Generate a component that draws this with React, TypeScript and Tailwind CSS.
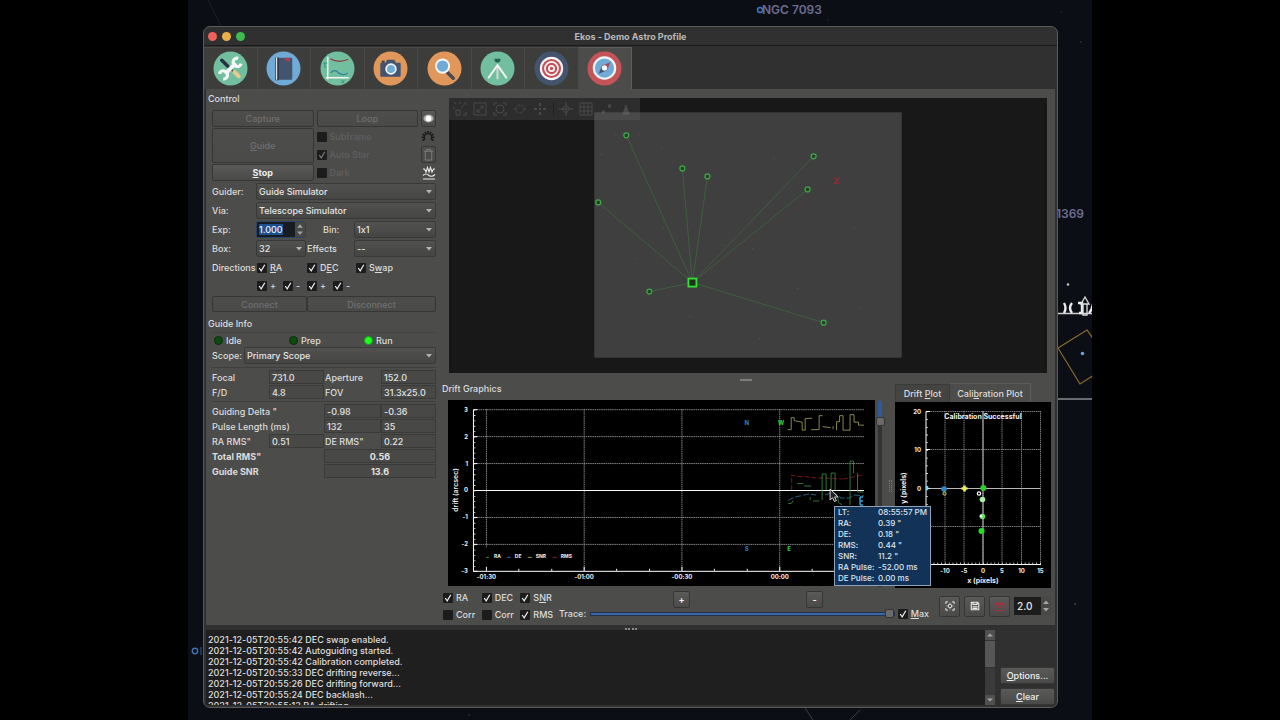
import type { ReactNode } from 'react';
import { useState } from 'react';
import clsx from 'clsx';

const LOG_LINES = [
  '2021-12-05T20:55:42 DEC swap enabled.',
  '2021-12-05T20:55:42 Autoguiding started.',
  '2021-12-05T20:55:42 Calibration completed.',
  '2021-12-05T20:55:33 DEC drifting reverse...',
  '2021-12-05T20:55:26 DEC drifting forward...',
  '2021-12-05T20:55:24 DEC backlash...',
  '2021-12-05T20:55:13 RA drifting...',
];

const TOOLTIP_ROWS = [
  ['LT:', '08:55:57 PM'],
  ['RA:', '0.39 "'],
  ['DE:', '0.18 "'],
  ['RMS:', '0.44 "'],
  ['SNR:', '11.2 "'],
  ['RA Pulse:', '-52.00 ms'],
  ['DE Pulse:', '0.00 ms'],
];

// Guide stars, relative to the viewer's top left corner.
const GUIDE_STARS = [
  [177, 37],
  [233, 70],
  [258, 78],
  [149, 104],
  [364, 58],
  [358, 91],
  [200, 193],
  [374, 224],
];

const FIELD_STARS = [
  [190, 36], [166, 36], [212, 50], [152, 56], [303, 150], [214, 130], [348, 190],
  [324, 60], [405, 130], [411, 210], [275, 147], [240, 218], [310, 240], [186, 160],
];

/* ---------- small controls ---------- */

type ButtonProps = { children: ReactNode; disabled?: boolean; className?: string; label?: string };

function PushButton({ children, disabled, className, label }: ButtonProps) {
  return (
    <button
      type="button"
      disabled={disabled}
      aria-label={label}
      className={clsx(
        'flex shrink-0 items-center justify-center rounded-[2px] border border-[#363635] bg-linear-to-b to-[#4a4a49]',
        disabled ? 'from-[#4d4d4c] text-[#70706f]' : 'from-[#5a5a59] text-[#eeeeee]',
        className,
      )}
    >
      {children}
    </button>
  );
}

type CheckProps = { children?: ReactNode; checked?: boolean; disabled?: boolean; label?: string };

function Check({ children, checked, disabled, label }: CheckProps) {
  return (
    <label className={clsx('flex items-center gap-[3px]', disabled && 'text-[#60605f]')}>
      <span className="grid size-[10px] shrink-0 place-items-center">
        <input
          type="checkbox"
          defaultChecked={checked}
          disabled={disabled}
          aria-label={label}
          className="peer col-start-1 row-start-1 size-[10px] appearance-none rounded-[1px] bg-[#1c1c1c]"
        />
        <svg
          viewBox="0 0 10 10"
          className={clsx(
            'pointer-events-none invisible col-start-1 row-start-1 size-[10px] fill-none peer-checked:visible',
            disabled ? 'stroke-[#777]' : 'stroke-[#f0f0f0]',
          )}
          strokeWidth="1.2"
        >
          <path d="M2.2 5 4.2 7.8 7.8 1.8" />
        </svg>
      </span>
      {children && <span>{children}</span>}
    </label>
  );
}

function Combo({ id, value, className }: { id: string; value: string; className?: string }) {
  return (
    <span className={clsx('grid h-[17px] items-center', className)}>
      <select
        id={id}
        defaultValue={value}
        className="col-start-1 row-start-1 h-full w-full appearance-none rounded-[2px] border border-[#393938] bg-linear-to-b from-[#515150] to-[#454544] px-[2px] text-[#e6e6e6]"
      >
        <option>{value}</option>
      </select>
      <svg viewBox="0 0 6 4" className="pointer-events-none col-start-1 row-start-1 mr-1 h-1 w-[6px] justify-self-end fill-[#b4b4b4]">
        <path d="M0 0h6L3 3.4z" />
      </svg>
    </span>
  );
}

function SpinArrows() {
  return (
    <svg viewBox="0 0 10 16" className="h-full w-[10px] shrink-0 bg-[#484847] fill-[#a5a5a5]">
      <path d="M2 6h6L5 2.5zM2 10h6L5 13.5z" />
    </svg>
  );
}

function Led({ on, children }: { on?: boolean; children: ReactNode }) {
  return (
    <span className="flex w-[75px] shrink-0 items-center gap-[3px]">
      <span className={clsx('size-[9px] rounded-full border', on ? 'border-[#14a014] bg-[#1eff1e]' : 'border-[#0a2c0a] bg-[#0d4a0d]')} />
      {children}
    </span>
  );
}

function Value({ value, label, className }: { value: string; label: string; className?: string }) {
  return (
    <input
      readOnly
      aria-label={label}
      defaultValue={value}
      className={clsx('h-[14px] w-full min-w-0 border border-[#3a3a39] bg-[#484847] px-[2px] text-[#e2e2e2]', className)}
    />
  );
}

/* ---------- module tab icons ---------- */

const MODULES: { name: string; color: string; art: ReactNode }[] = [
  {
    name: 'Setup',
    color: '#72bfa0',
    art: (
      <>
        <path d="M9 9.500 15 15.500" stroke="#273142" strokeWidth="3.600" strokeLinecap="round" />
        <path d="M15 15 21 21" stroke="#273142" strokeWidth="1.600" />
        <path d="m22 21.500 4.500 4.500" stroke="#e8c987" strokeWidth="4" strokeLinecap="round" />
        <path d="m12.500 23.500 11-11" stroke="#f6f6f6" strokeWidth="4" />
        <path d="M26 7.500a4.300 4.300 0 1 0 3 5.500M6.500 23.500a4.300 4.300 0 1 1 4 5.500" fill="none" stroke="#f6f6f6" strokeWidth="3.200" />
      </>
    ),
  },
  {
    name: 'Scheduler',
    color: '#6fabd6',
    art: (
      <>
        <path d="M9.500 7h4v23h-4z" fill="#3b4559" />
        <path d="M11 7v22.500" stroke="#f4f4f4" strokeWidth="1.200" />
        <path d="M12.500 7H26q1 0 1 1v20.500q0 1-1 1H12.500z" fill="#44546f" />
        <path d="M12.500 7v22.500" stroke="#1f2838" strokeWidth="1" />
        <path d="M20 7h4.500v4l-2.200-1.300L20 11z" fill="#b53b4d" />
      </>
    ),
  },
  {
    name: 'Analyze',
    color: '#72bfa0',
    art: (
      <g fill="none">
        <path d="M8 6v23M6 27.500h23.500" stroke="#f4f4f4" strokeWidth="1.500" />
        <path d="M10.500 8q9 5 18.500.500" stroke="#8c3b40" strokeWidth="1.300" />
        <path d="M11 22.500q4-4.500 8 0 5 3.500 9.500 0" stroke="#2f7f9f" strokeWidth="1.300" />
        <path d="M3.500 12.500h4M5 12.500v5M22 30l3 3M25 30l-3 3" stroke="#2f9079" strokeWidth="1" />
      </g>
    ),
  },
  {
    name: 'Capture',
    color: '#e2975a',
    art: (
      <>
        <path d="M8.500 12H13l1.500-3h7.500l1.500 3h4q1 0 1 1v12.500q0 1-1 1h-19q-1 0-1-1V13q0-1 1-1z" fill="#44546f" />
        <path d="M9 10h3v2H9z" fill="#2d384c" />
        <circle cx="18.500" cy="18.500" r="5" fill="#6fabd6" stroke="#f4f4f4" strokeWidth="1.800" />
      </>
    ),
  },
  {
    name: 'Focus',
    color: '#e2975a',
    art: (
      <>
        <path d="m21 22 6 6" stroke="#4b4a52" strokeWidth="3.600" strokeLinecap="round" />
        <circle cx="16" cy="15.500" r="6.800" fill="#6fabd6" stroke="#f6f6f6" strokeWidth="2" />
      </>
    ),
  },
  {
    name: 'Mount',
    color: '#72bfa0',
    art: (
      <>
        <path d="M15 8h6v1.500q-.500 2.500-3 2.500t-3-2.500z" fill="#22604f" />
        <path d="M18 16v13" stroke="#d5d9d2" strokeWidth="2.200" />
        <path d="m8.500 28 9.500-13.500L27.500 28" fill="none" stroke="#f6f6f6" strokeWidth="2" />
      </>
    ),
  },
  {
    name: 'Align',
    color: '#44546f',
    art: (
      <>
        <circle cx="18" cy="18" r="12" fill="#f6f6f6" />
        <circle cx="18" cy="18" r="8.700" fill="none" stroke="#c4505a" strokeWidth="2.200" />
        <circle cx="18" cy="18" r="4.700" fill="none" stroke="#c4505a" strokeWidth="2.200" />
        <circle cx="18" cy="18" r="1.700" fill="#c4505a" />
      </>
    ),
  },
  {
    name: 'Guide',
    color: '#c4545a',
    art: (
      <>
        <circle cx="18" cy="17.500" r="11" fill="#6fabd6" stroke="#f6f6f6" strokeWidth="2.200" />
        <path d="m24 11.500-3.500 8.500-5-5z" fill="#a8485a" />
        <path d="m12 23.500 3.500-8.500 5 5z" fill="#44546f" />
        <circle cx="18" cy="17.500" r="2.800" fill="#f6f6f6" />
      </>
    ),
  },
];

function ModuleTabs() {
  const [active, setActive] = useState('Guide');
  return (
    <nav className="h-[43px] bg-[#303030] pt-px">
      <div role="tablist" className="grid h-[42px] w-[428px] grid-cols-8">
        {MODULES.map((m) => (
          <button
            key={m.name}
            type="button"
            role="tab"
            aria-label={m.name}
            aria-selected={m.name === active}
            onClick={() => setActive(m.name)}
            className={clsx(
              'grid place-items-center border-t border-r',
              m.name === active ? 'border-[#5e5e5d] bg-[#4c4c4a]' : 'border-[#4a4a49] bg-[#3d3d3b]',
            )}
          >
            <svg viewBox="0 0 36 36" className="size-[35px]">
              <circle cx="18" cy="18" r="17.500" fill={m.color} />
              {m.art}
            </svg>
          </button>
        ))}
      </div>
    </nav>
  );
}

/* ---------- left column ---------- */

function ControlPanel() {
  return (
    <section>
      <h2 className="mt-1">Control</h2>
      <div className="mt-[6px] ml-1 flex flex-col gap-[2px]">
        <div className="grid auto-rows-[17px] grid-cols-[1fr_1fr_15px] gap-x-[3px] gap-y-px">
          <PushButton disabled>Capture</PushButton>
          <PushButton disabled>Loop</PushButton>
          <PushButton label="Toggle preview">
            <svg viewBox="0 0 14 14" className="size-[13px]">
              <ellipse cx="7" cy="7" rx="5.500" ry="4.200" fill="#a8a8a8" />
              <circle cx="7" cy="7" r="3.200" fill="#fff" />
            </svg>
          </PushButton>
          <PushButton disabled className="row-span-2"><span><u>G</u>uide</span></PushButton>
          <Check disabled>Subframe</Check>
          <svg viewBox="0 0 14 14" className="size-[14px] self-center fill-none stroke-[#191919]" strokeWidth="1.600">
            <path d="M7 1v3.500M10 1.800 8.600 4.800M12.500 4.200 9.700 6M13.300 7.200h-3.400M4 1.800l1.400 3M1.500 4.200 4.300 6M.700 7.200h3.400M1.500 10.500l2.800-1.800M12.500 10.500 9.700 8.700" />
          </svg>
          <Check disabled checked>Auto Star</Check>
          <PushButton disabled label="Clear calibration">
            <svg viewBox="0 0 14 14" className="size-[13px] fill-none stroke-[#80807f]" strokeWidth="1">
              <path d="M2 3.500h10M5 3.500V1.500h4v2M3.500 3.500v9.500h7V3.500" />
            </svg>
          </PushButton>
          <PushButton className="font-bold"><span><u>S</u>top</span></PushButton>
          <Check disabled>Dark</Check>
          <button type="button" aria-label="Guide assistant" className="grid place-items-center">
            <svg viewBox="0 0 14 14" className="size-[14px] fill-none stroke-[#ececec]" strokeWidth="1.100">
              <path d="M1 3h1.500L4 6l1.500-4.500L7 6l1.500-4.500L10 6l1.500-3H13M1 9.500q3-3 6 0 3 2 6-1M1 13h12" />
            </svg>
          </button>
        </div>
        <div className="flex items-center">
          <label htmlFor="guider" className="w-[44px]">Guider:</label>
          <Combo id="guider" value="Guide Simulator" className="flex-1" />
        </div>
        <div className="flex items-center">
          <label htmlFor="via" className="w-[44px]">Via:</label>
          <Combo id="via" value="Telescope Simulator" className="flex-1" />
        </div>
        <div className="flex items-center">
          <label htmlFor="exp" className="w-[44px]">Exp:</label>
          <span className="flex h-[17px] w-[50px] rounded-[2px] border border-[#2c4468]">
            <input
              id="exp"
              defaultValue="1.000"
              className="w-[38px] min-w-0 border-y-2 border-r-[12px] border-l-2 border-[#171b22] bg-[#1d4f92] text-[#f2f2f2]"
            />
            <SpinArrows />
          </span>
          <label htmlFor="bin" className="w-[48px] pl-[17px]">Bin:</label>
          <Combo id="bin" value="1x1" className="flex-1" />
        </div>
        <div className="flex items-center">
          <label htmlFor="box" className="w-[44px]">Box:</label>
          <Combo id="box" value="32" className="w-[50px]" />
          <label htmlFor="effects" className="w-[48px] pl-px">Effects</label>
          <Combo id="effects" value="--" className="flex-1" />
        </div>
        <fieldset className="flex flex-col gap-px">
          <div className="flex h-[17px] items-center">
            <span className="w-[45px]">Directions</span>
            <div className="grid grid-cols-[50px_49px_50px]">
              <Check checked><u>R</u>A</Check>
              <Check checked>D<u>E</u>C</Check>
              <Check checked>S<u>w</u>ap</Check>
            </div>
          </div>
          <div className="ml-[45px] grid h-[17px] grid-cols-[26px_24px_26px_24px] items-center">
            <Check checked>+</Check>
            <Check checked>-</Check>
            <Check checked>+</Check>
            <Check checked>-</Check>
          </div>
        </fieldset>
        <div className="grid h-4 grid-cols-[95px_1fr]">
          <PushButton disabled>Connect</PushButton>
          <PushButton disabled>Disconnect</PushButton>
        </div>
      </div>
    </section>
  );
}

function GuideInfo() {
  return (
    <section>
      <h2 className="mt-[6px]">Guide Info</h2>
      <div className="mt-[3px] ml-1">
        <div className="flex h-[15px] items-center border-t border-[#444443] pl-[2px]">
          <Led>Idle</Led>
          <Led>Prep</Led>
          <Led on>Run</Led>
        </div>
        <div className="flex items-center border-b border-[#3e3e3d] pb-[3px]">
          <label htmlFor="scope" className="w-[32px]">Scope:</label>
          <Combo id="scope" value="Primary Scope" className="flex-1" />
        </div>
        <div className="mt-[2px] grid grid-cols-[57px_1fr_57px_1fr] items-center gap-y-px">
          <span>Focal</span>
          <Value label="Focal" value="731.0" />
          <span className="pl-px">Aperture</span>
          <Value label="Aperture" value="152.0" />
          <span>F/D</span>
          <Value label="F/D" value="4.8" />
          <span className="pl-px">FOV</span>
          <Value label="FOV" value="31.3x25.0" />
          <hr className="col-span-4 my-px border-[#3e3e3d]" />
          <span className="col-span-2">Guiding Delta "</span>
          <Value label="RA guiding delta" value="-0.98" />
          <Value label="DEC guiding delta" value="-0.36" />
          <span className="col-span-2">Pulse Length (ms)</span>
          <Value label="RA pulse length" value="132" />
          <Value label="DEC pulse length" value="35" />
          <span>RA RMS"</span>
          <Value label="RA RMS" value="0.51" />
          <span className="pl-px">DE RMS"</span>
          <Value label="DE RMS" value="0.22" />
          <span className="col-span-2 font-bold">Total RMS"</span>
          <Value label="Total RMS" value="0.56" className="col-span-2 text-center font-bold" />
          <span className="col-span-2 font-bold">Guide SNR</span>
          <Value label="Guide SNR" value="13.6" className="col-span-2 text-center font-bold" />
        </div>
      </div>
    </section>
  );
}

/* ---------- camera view ---------- */

const VIEW_TOOLS: { name: string; art: ReactNode }[] = [
  { name: 'Zoom fit', art: <path d="M1 1h2M6 1h2M11 1h2v2M1 5v2M8 6l3-3M3 8h4v5H3zM13 10v3h-3" /> },
  { name: 'Zoom default', art: <path d="M1 1h12v12H1zM4 10l6-6M7 4h3v3M4 7v3h3" /> },
  { name: 'Zoom in', art: <path d="M1 4V1h3M10 1h3v3M13 10v3h-3M4 13H1v-3M7 3a4 4 0 1 0 0 8 4 4 0 0 0 0-8z" /> },
  { name: 'Zoom out', art: <path d="M7 3a4 4 0 1 0 0 8 4 4 0 0 0 0-8zM1 7h2M11 7h2" strokeDasharray="3 1" /> },
  { name: 'Center', art: <path d="M7 1v3M7 10v3M1 7h3M10 7h3M6 7h2" strokeWidth="2" /> },
  { name: 'Crosshair', art: <path d="M7 0v14M0 7h14M7 3 3 7l4 4 4-4z" /> },
  { name: 'Grid', art: <path d="M1 1h12v12H1zM5 1v12M9 1v12M1 5h12M1 9h12" /> },
  { name: 'Mark stars', art: <path d="M3 10h3M9 4h3" strokeWidth="3" /> },
  { name: 'Histogram', art: <path d="m7 3 3 9H4z" fill="#8a8a8a" /> },
];

function GuideView() {
  return (
    <div className="relative mr-2 ml-[13px] flex min-h-[200px] flex-1 basis-0 bg-[#181818]">
      <svg viewBox="0 0 597 274" className="h-full min-h-0 w-full flex-1">
        <rect x="145" y="14" width="307" height="245" fill="#3f3f3f" />
        {FIELD_STARS.map(([x, y]) => (
          <circle key={`${x}-${y}`} cx={x} cy={y} r=".8" fill="#505050" />
        ))}
        {GUIDE_STARS.map(([x, y]) => (
          <line key={`${x}-${y}`} x1="243" y1="184" x2={x} y2={y} stroke="#3f663f" strokeWidth=".8" />
        ))}
        <path d="M243 184 384 83" stroke="#7a2a2a" strokeWidth=".6" strokeDasharray="2 4" />
        <path d="m384 86 6-7M384 79l4 3M386 85l5-1" stroke="#a32a34" strokeWidth="1" />
        {GUIDE_STARS.map(([x, y]) => (
          <circle key={`${x}-${y}`} cx={x} cy={y} r="2.500" fill="#234523" stroke="#3fa84a" strokeWidth="1.200" />
        ))}
        <rect x="239" y="180" width="8" height="8" fill="#1d331d" stroke="#35e035" strokeWidth="1.800" />
      </svg>
      <div className="absolute top-0 left-0 flex h-[22px] w-[191px] items-center gap-[6px] bg-[#6a6a6a]/25 pl-1">
        {VIEW_TOOLS.map((t) => (
          <button
            key={t.name}
            type="button"
            aria-label={t.name}
            className={clsx(t.name === 'Crosshair' && 'border-l border-[#222] pl-[5px]')}
          >
            <svg viewBox="0 0 14 14" className="size-[14px] fill-none stroke-[#8a8a8a] opacity-30" strokeWidth="1">
              {t.art}
            </svg>
          </button>
        ))}
      </div>
    </div>
  );
}

/* ---------- plots ---------- */

const driftY = (v: number) => 90.5 - v * 27;

function DriftChart() {
  return (
    <svg viewBox="0 0 428 186" className="h-[186px] w-full bg-black text-[6px] font-bold" fill="#f0f0f0">
      <g stroke="#969696" strokeWidth=".9" strokeDasharray="1.500 .7">
        {[3, 2, 1, -1, -2].map((v) => (
          <line key={v} x1="26" x2="417" y1={driftY(v)} y2={driftY(v)} />
        ))}
        {[38.5, 136.5, 234.5, 332.5].map((x) => (
          <line key={x} x1={x} x2={x} y1="9" y2={x < 100 ? 148 : 171} />
        ))}
      </g>
      <path d="M25.500 9.500v162H417M25.500 90.500H417" stroke="#fff" strokeWidth="1" fill="none" />
      {[3, 2, 1, 0, -1, -2, -3].map((v) => (
        <g key={v}>
          <path d={`M25.500 ${driftY(v)}h4`} stroke="#fff" />
          <text x="20" y={driftY(v) + 2} textAnchor="end">{v}</text>
        </g>
      ))}
      <path d="M26.500 9.500v162" stroke="#ddd" strokeWidth="2" strokeDasharray=".8 4.600" />
      <path d="M38.500 171v-4M71 171v-2M104 171v-2M136.500 171v-4M169 171v-2M202 171v-2M234.500 171v-4M267 171v-2M300 171v-2M332.500 171v-4M365 171v-2" stroke="#fff" />
      {['-01:30', '-01:00', '-00:30', '00:00'].map((t, i) => (
        <text key={t} x={38.5 + i * 98} y="179" textAnchor="middle">{t}</text>
      ))}
      <text x="10" y="90" textAnchor="middle" className="text-[7px] font-semibold" transform="rotate(-90 10 90)">drift (arcsec)</text>
      <g className="text-[5px]">
        <path d="M38 157.500h3" stroke="#4a8a4a" />
        <text x="46" y="158">RA</text>
        <path d="M59 157.500h4" stroke="#3c64a8" />
        <text x="67" y="158">DE</text>
        <path d="M80 157.500h4" stroke="#a0a070" />
        <text x="88" y="158">SNR</text>
        <path d="M105 157.500h4" stroke="#902030" />
        <text x="113" y="158">RMS</text>
      </g>
      <g textAnchor="middle">
        <text x="299.500" y="25" fill="#2f86c9">N</text>
        <text x="334" y="25" fill="#3ddc3d">W</text>
        <text x="299.500" y="151" fill="#2f86c9">S</text>
        <text x="342" y="151" fill="#3ddc3d">E</text>
      </g>
      <g fill="none" strokeWidth=".9" opacity=".85">
        <path
          d="M340.500 29.500h3.500V17.500h3v3l8 1.500v8h3V18.500l7-.500M364 29.500h8V15.500h3.500M375.500 26.500l8 1M386 26v3M389.500 30V21.500h3V15.500h3.500V30h7V14.500h4v7.500h4.500v3h5.500"
          stroke="#b3b061"
        />
        <path d="M344.500 90V75l6 1.500h7l12 1.500h8l18 1M396 79l10-2 9-2" stroke="#a01c22" strokeDasharray="5 2" />
        <path d="M341 103.500h3l2-3M350 83.500h6M357 86h7M363 97v3M366 101h6M375 100V74h4v16M384 90V73h4v17M391 97v5l4 3M403 105V61h3.500v12M410.500 73v19h6" stroke="#3f9c46" />
        <path d="M341 100.500q6-4 12-4.500l8-2 8 1M378 95l8-3 8 6h8l6-3 9 1" stroke="#2f86a9" strokeDasharray="6 2" />
      </g>
      <path d="M413 97v8M413 97h3M413 101h3M413 105h3" stroke="#2f9fe0" fill="none" strokeWidth="1.500" />
      <path d="M383 89v11l2.500-2.200 1.800 3.800 2-1-1.800-3.600h3.500z" fill="#222" stroke="#eee" strokeWidth=".9" />
    </svg>
  );
}

function CalibrationChart() {
  const xs = [50, 69, 88, 107, 126.5, 145.5];
  return (
    <svg viewBox="0 0 156 186" className="h-[186px] w-full bg-black text-[6px] font-bold" fill="#f0f0f0">
      <g stroke="#8a8a8a" strokeWidth=".9" strokeDasharray="1.500 .7">
        {[9.5, 47.5, 124.5].map((y) => (
          <line key={y} x1="31" x2="145" y1={y} y2={y} />
        ))}
        {xs.map((x) => (
          <line key={x} x1={x} x2={x} y1="9" y2="162" />
        ))}
      </g>
      <path d="M31 86.500h114.500M88 9v153" stroke="#b8b8b8" />
      <path d="M31 9.500v153h115" stroke="#fff" fill="none" />
      <path d="M32 9.500v153" stroke="#ddd" strokeWidth="2" strokeDasharray=".8 6.900" />
      <path d="M31 161.500h115" stroke="#ddd" strokeWidth="2" strokeDasharray=".8 3" />
      <path d="M31 9.500h4M31 47.500h4M31 86.500h4M31 124.500h4" stroke="#fff" />
      <g textAnchor="end">
        <text x="26" y="11.500">20</text>
        <text x="26" y="50">10</text>
        <text x="26" y="88.500">0</text>
      </g>
      <g textAnchor="middle">
        {['-10', '-5', '0', '5', '10', '15'].map((t, i) => (
          <text key={t} x={xs[i]} y="170.500">{t}</text>
        ))}
        <text x="88" y="180.500" className="text-[7px]">x (pixels)</text>
        <text x="11" y="86" className="text-[7px]" transform="rotate(-90 11 86)">y (pixels)</text>
        <text x="88" y="17" className="text-[7px]">Calibration Successful</text>
      </g>
      <path d="M31 83.500a2.500 2.500 0 0 1 0 5z" fill="#7fd6e8" />
      <circle cx="49" cy="87" r="2.800" fill="#2f86c9" />
      <circle cx="49.500" cy="91.500" r="1.600" fill="#333" stroke="#cdd86a" />
      <path d="M66.500 86.500h6M69.500 83.500v6" stroke="#f0f060" strokeWidth="2.600" />
      <circle cx="84" cy="91.500" r="1.700" fill="#000" stroke="#fff" strokeWidth="1.200" />
      <circle cx="88.300" cy="86" r="3" fill="#22d522" />
      <circle cx="87.500" cy="97.500" r="2.800" fill="#a6f3a6" />
      <circle cx="87.500" cy="114.500" r="2.800" fill="#5fe45f" />
      <circle cx="86" cy="114" r="1.500" fill="#eaffea" />
      <circle cx="86.500" cy="129" r="3" fill="#22e022" />
    </svg>
  );
}

function DriftTooltip() {
  return (
    <dl className="absolute top-[106px] left-[386px] z-10 grid w-[97px] grid-cols-[40px_1fr] border border-[#8ea3b8] bg-[#123258] px-[3px] pb-px text-[8px] leading-[11px] text-[#dde5ee] whitespace-nowrap">
      {TOOLTIP_ROWS.map(([k, v]) => (
        <div key={k} className="contents">
          <dt>{k}</dt>
          <dd>{v}</dd>
        </div>
      ))}
    </dl>
  );
}

function PlotControls() {
  return (
    <div className="mt-[3px] flex h-[30px] pl-[1px]">
      <div className="grid w-[116px] grid-cols-3 gap-y-1">
        <Check checked>RA</Check>
        <Check checked>DEC</Check>
        <Check checked>S<u>N</u>R</Check>
        <Check>Corr</Check>
        <Check>Corr</Check>
        <Check checked>RMS</Check>
      </div>
      <div className="flex flex-1 flex-col">
        <div className="flex gap-[116px] pl-[114px]">
          <PushButton className="size-[17px] font-bold">+</PushButton>
          <PushButton className="size-[17px] font-bold">-</PushButton>
        </div>
        <div className="flex items-center">
          <label htmlFor="trace" className="w-[31px]">Trace:</label>
          <input
            id="trace"
            type="range"
            defaultValue={100}
            className="mr-[3px] h-[10px] flex-1 appearance-none bg-transparent [&::-webkit-slider-runnable-track]:h-1 [&::-webkit-slider-runnable-track]:border [&::-webkit-slider-runnable-track]:border-[#22324d] [&::-webkit-slider-runnable-track]:bg-[#3b66a6] [&::-webkit-slider-thumb]:mt-[-4px] [&::-webkit-slider-thumb]:size-[9px] [&::-webkit-slider-thumb]:appearance-none [&::-webkit-slider-thumb]:rounded-[2px] [&::-webkit-slider-thumb]:border [&::-webkit-slider-thumb]:border-[#333] [&::-webkit-slider-thumb]:bg-[#6a6a69]"
          />
          <Check checked><u>M</u>ax</Check>
        </div>
      </div>
      <div className="ml-[10px] flex items-center gap-1">
        <PushButton label="Autoscale" className="size-[21px]">
          <svg viewBox="0 0 12 12" className="size-[10px] fill-none stroke-[#e6e6e6]" strokeWidth="1.200">
            <path d="M1 3.500V1h2.500M8.500 1H11v2.500M11 8.500V11H8.500M3.500 11H1V8.500" />
            <circle cx="6" cy="6" r="2.200" />
            <path d="M6 2v1M6 9v1M2 6h1M9 6h1" />
          </svg>
        </PushButton>
        <PushButton label="Export" className="size-[21px]">
          <svg viewBox="0 0 12 12" className="size-[10px] fill-none stroke-[#ececec]" strokeWidth="1.300">
            <path d="M1.500 1.500h7.500l1.500 1.500v7.500h-9zM3.500 1.500v2.500h5V1.500M3 7h6M3 9h6" />
          </svg>
        </PushButton>
        <PushButton label="Clear graphs" className="size-[21px]">
          <svg viewBox="0 0 12 12" className="size-[11px] fill-none stroke-[#a5303f]" strokeWidth="1.300">
            <path d="M1.500 2.500h9v8h-9zM1.500 4h9M3.500 1v2M8.500 1v2M4 7h4" />
          </svg>
        </PushButton>
        <span className="flex h-[18px] w-[37px]">
          <input aria-label="Accuracy radius" defaultValue="2.0" className="w-[27px] min-w-0 bg-[#1c1c1c] px-[3px] text-[10px] text-[#e8e8e8]" />
          <SpinArrows />
        </span>
      </div>
    </div>
  );
}

function PlotArea() {
  return (
    <>
      <div className="flex">
        <section className="flex-1">
          <h2>Drift Graphics</h2>
          <div className="mt-[6px] flex pl-[6px]">
            <div className="relative flex-1">
              <DriftChart />
              <DriftTooltip />
            </div>
            <input
              type="range"
              aria-label="Vertical zoom"
              defaultValue={91}
              className="mx-px h-[186px] w-[10px] appearance-none bg-transparent [writing-mode:vertical-lr] [direction:rtl] [&::-webkit-slider-runnable-track]:w-1 [&::-webkit-slider-runnable-track]:bg-linear-to-b [&::-webkit-slider-runnable-track]:from-[#2f5a9a] [&::-webkit-slider-runnable-track]:from-12% [&::-webkit-slider-runnable-track]:to-[#333] [&::-webkit-slider-runnable-track]:to-12% [&::-webkit-slider-thumb]:ml-[-2px] [&::-webkit-slider-thumb]:size-[9px] [&::-webkit-slider-thumb]:appearance-none [&::-webkit-slider-thumb]:rounded-[2px] [&::-webkit-slider-thumb]:border [&::-webkit-slider-thumb]:border-[#333] [&::-webkit-slider-thumb]:bg-[#6a6a69]"
            />
          </div>
        </section>
        <div className="mr-[3px] ml-[4px] h-3 w-[3px] self-center border-x border-dotted border-[#777]" />
        <section className="w-[156px]">
          <div role="tablist" className="flex h-[19px] items-end">
            <button type="button" role="tab" aria-selected="false" className="h-[18px] w-[55px] border border-b-0 border-[#3a3a39] bg-[#444443] whitespace-nowrap">
              Drift <u>P</u>lot
            </button>
            <button type="button" role="tab" aria-selected="true" className="h-[19px] w-[81px] border-t border-r border-[#5c5c5b] bg-[#4c4c4a] whitespace-nowrap">
              Cali<u>b</u>ration Plot
            </button>
          </div>
          <CalibrationChart />
        </section>
      </div>
      <PlotControls />
    </>
  );
}

/* ---------- log ---------- */

function LogPanel() {
  return (
    <footer className="bg-[#303030] pb-[2px]">
      <div className="mx-auto mt-px h-[4px] w-3 border-b-2 border-dotted border-[#8a8a8a]" />
      <div className="flex h-[75px] gap-[5px]">
        <div className="flex flex-1 bg-[#1f1f1f]">
          <div className="h-full flex-1 overflow-hidden pt-1 pl-[2px] text-[#dddddd]">
            {LOG_LINES.map((line) => (
              <p key={line}>{line}</p>
            ))}
          </div>
          <div className="flex w-[10px] flex-col bg-[#3a3a3a]">
            <svg viewBox="0 0 10 10" className="size-[10px] bg-[#505050] fill-[#a5a5a5]"><path d="M2 6.500h6L5 3.500z" /></svg>
            <div className="h-[28px] border-y border-[#333] bg-[#565655]" />
            <svg viewBox="0 0 10 10" className="mt-auto size-[10px] bg-[#505050] fill-[#a5a5a5]"><path d="M2 3.500h6L5 6.500z" /></svg>
          </div>
        </div>
        <div className="flex w-[55px] flex-col justify-end gap-1">
          <PushButton className="h-[17px]"><span><u>O</u>ptions...</span></PushButton>
          <PushButton className="h-[17px]"><span><u>C</u>lear</span></PushButton>
        </div>
      </div>
    </footer>
  );
}

/* ---------- desktop ---------- */

function SkyMap() {
  return (
    <div className="absolute inset-0 overflow-hidden text-[12px] leading-[14px] font-semibold text-[#6c6c90]">
      <svg viewBox="0 0 904 720" className="h-full w-full" fill="none">
        <path d="M20 0 34 28" stroke="#1d2026" />
        <circle cx="572" cy="10" r="2.500" stroke="#3f74c8" strokeWidth="1.500" />
        <circle cx="7" cy="651" r="2.700" stroke="#3f6fb0" strokeWidth="1.500" />
        <path d="M13 655v-8" stroke="#38588a" />
        <circle cx="880" cy="284.500" r="1.200" fill="#c8c8c8" />
        <path d="M870 313.500h34" stroke="#cfcfcf" strokeWidth="1.500" />
        <path d="M876 303q3 5 0 10M884 303q-4 5 0 10M890 303h4v10h-3M901 313q3-3 4-9" stroke="#ececec" strokeWidth="2.400" />
        <path d="m897 297-4 7h8zM895 304v11h4v-11" stroke="#dcdcdc" strokeWidth="1.300" />
        <path d="M870 348 899 330l14 20M870 348l22 36 14-9" stroke="#8b6a2c" strokeWidth="1.200" />
        <circle cx="894.500" cy="353.500" r="1.800" fill="#6ca2d8" />
        <path d="M868 399h36" stroke="#8a8c90" strokeWidth="1.500" />
        <path d="m617 708 8 12M672 710l-10 10" stroke="#3b3e48" />
        <g fill="#3d4654">
          <circle cx="893" cy="42" r=".8" />
          <circle cx="887" cy="604" r="1" />
          <circle cx="281" cy="715" r=".8" />
          <circle cx="873" cy="12" r=".6" />
          <circle cx="640" cy="20" r=".6" />
        </g>
      </svg>
      <span className="absolute top-[3px] left-[574px]">NGC 7093</span>
      <span className="absolute top-[207px] right-2">1369</span>
    </div>
  );
}

export default function App() {
  return (
    <div className="min-h-screen bg-black px-[188px] font-['Inter',sans-serif] text-[9px] leading-[11px] font-medium text-[#dcdcdc] [font-feature-settings:'calt'_0]">
      <main className="relative flex min-h-screen bg-[#0b0f15] pt-[26px] pr-[34px] pb-3 pl-[15px]">
        <SkyMap />
        <div className="relative flex flex-1 flex-col overflow-hidden rounded-[7px] border border-[#5b5b5b] bg-[#303030]">
          <header className="flex h-[19px] items-center border-b border-[#1c1c1c] pl-1">
            <div className="flex w-[50px] gap-[5px]">
              <span className="size-[9px] rounded-full bg-[#ec6259]" />
              <span className="size-[9px] rounded-full bg-[#e9b04b]" />
              <span className="size-[9px] rounded-full bg-[#3fb950]" />
            </div>
            <h1 className="flex-1 pr-[54px] text-center font-bold text-[#b8b8b8]">Ekos - Demo Astro Profile</h1>
          </header>
          <ModuleTabs />
          <div className="mx-[2px] flex flex-1 bg-[#4c4c4a]">
            <aside className="w-[230px] pl-[2px]">
              <ControlPanel />
              <GuideInfo />
            </aside>
            <div className="flex flex-1 flex-col pt-[9px]">
              <GuideView />
              <div className="mx-auto mt-[6px] mb-[2px] h-[2px] w-3 shrink-0 bg-[#7d7d7c]" />
              <div className="mb-1 pr-1 pl-[6px]">
                <PlotArea />
              </div>
            </div>
          </div>
          <div className="mx-[2px]">
            <LogPanel />
          </div>
        </div>
      </main>
    </div>
  );
}
